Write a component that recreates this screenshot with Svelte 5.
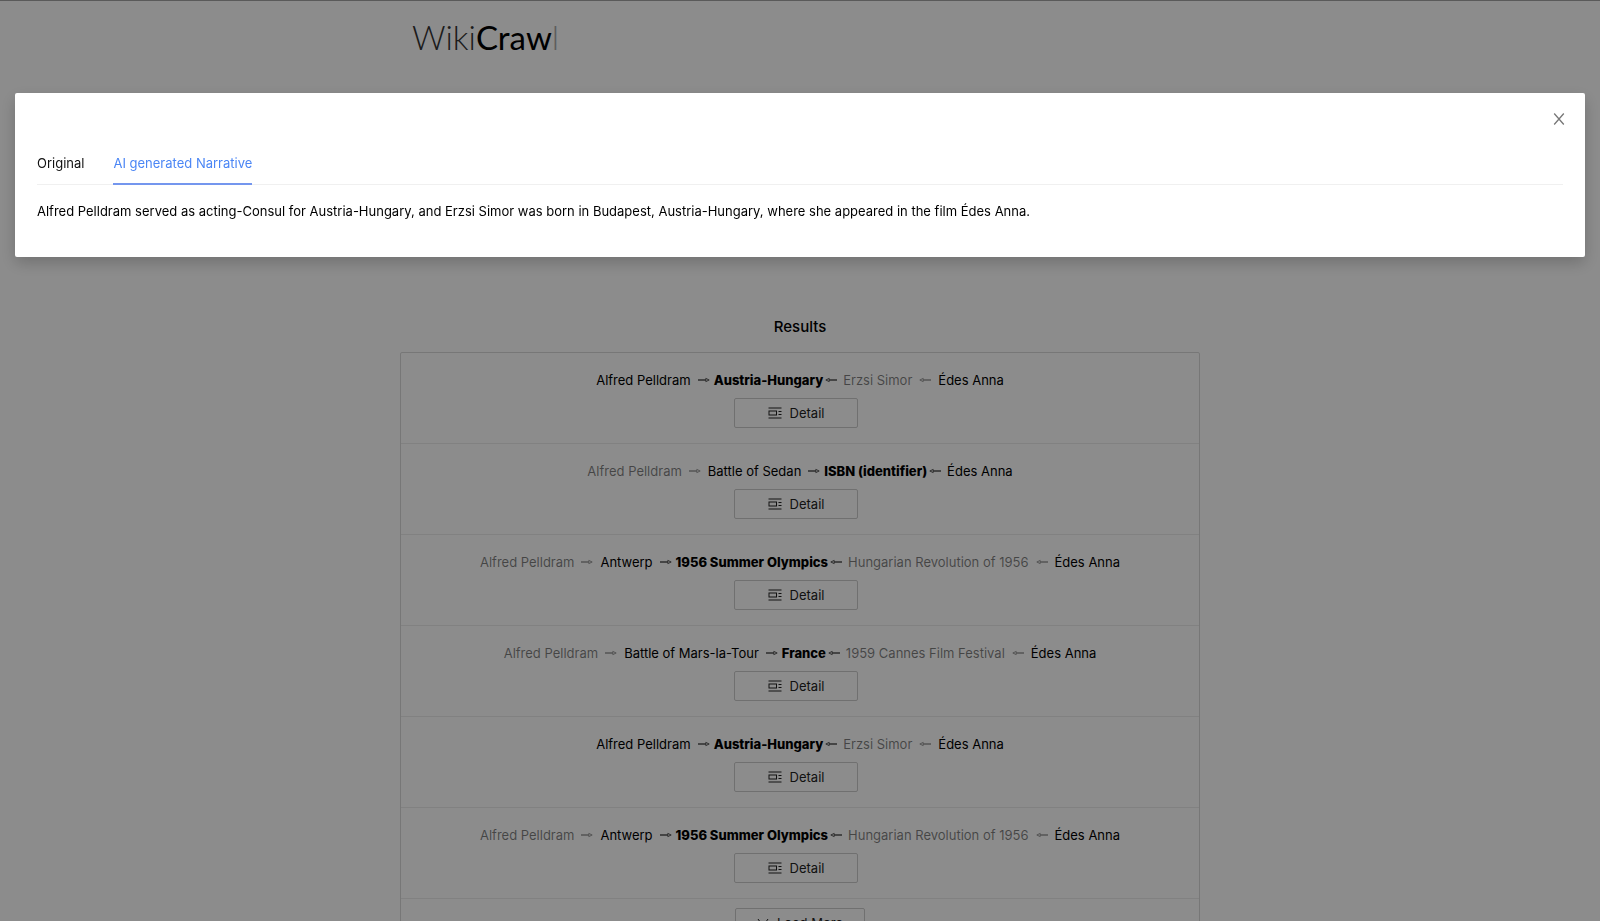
<script lang="ts">
  type Step = { title: string; visited?: boolean };

  const routes: { left: Step[]; meet: string; right: Step[] }[] = [
    {
      left: [{ title: "Alfred Pelldram" }],
      meet: "Austria-Hungary",
      right: [{ title: "Erzsi Simor", visited: true }, { title: "Édes Anna" }]
    },
    {
      left: [{ title: "Alfred Pelldram", visited: true }, { title: "Battle of Sedan" }],
      meet: "ISBN (identifier)",
      right: [{ title: "Édes Anna" }]
    },
    {
      left: [{ title: "Alfred Pelldram", visited: true }, { title: "Antwerp" }],
      meet: "1956 Summer Olympics",
      right: [{ title: "Hungarian Revolution of 1956", visited: true }, { title: "Édes Anna" }]
    },
    {
      left: [{ title: "Alfred Pelldram", visited: true }, { title: "Battle of Mars-la-Tour" }],
      meet: "France",
      right: [{ title: "1959 Cannes Film Festival", visited: true }, { title: "Édes Anna" }]
    },
    {
      left: [{ title: "Alfred Pelldram" }],
      meet: "Austria-Hungary",
      right: [{ title: "Erzsi Simor", visited: true }, { title: "Édes Anna" }]
    },
    {
      left: [{ title: "Alfred Pelldram", visited: true }, { title: "Antwerp" }],
      meet: "1956 Summer Olympics",
      right: [{ title: "Hungarian Revolution of 1956", visited: true }, { title: "Édes Anna" }]
    }
  ];

  const tabs = ["Original", "AI generated Narrative"];
  let activeTab = $state(1);
  let open = $state(true);
</script>

{#snippet arrow(back: boolean, faded: boolean)}
  <svg class="arrow" class:back class:faded width="12" height="8" viewBox="0 0 12 8" fill="none" stroke="currentColor" aria-hidden="true">
    <path d="M0 4H8" stroke-width="1.5" />
    <path d="M7.8 2.4L11.2 4L7.8 5.6Z" stroke-width="1" />
  </svg>
{/snippet}

<div class="page">
  <header class="header">
    <h1 class="logo"><span class="thin">Wiki</span><span class="thick">Craw</span><span class="last">l</span></h1>
  </header>

  <main class="results">
    <h2 class="results-title">Results</h2>
    <ul class="list">
      {#each routes as route}
        <li class="item">
          <div class="route">
            {#each route.left as step}
              <span class="step" class:visited={step.visited}>{step.title}</span>
              {@render arrow(false, !!step.visited)}
            {/each}
            <strong class="meet">{route.meet}</strong>
            {#each route.right as step, i}
              {@render arrow(true, i > 0)}
              <span class="step" class:visited={step.visited}>{step.title}</span>
            {/each}
          </div>
          <button class="btn" onclick={() => (open = true)}>
            <svg width="14" height="12" viewBox="0 0 14 12" fill="none" stroke="currentColor" aria-hidden="true">
              <path d="M0.5 1H13.5M0.5 11H13.5M10.5 4.5H13.5M10.5 7.5H13.5" />
              <rect x="1" y="4" width="7.5" height="4" />
            </svg>
            Detail
          </button>
        </li>
      {/each}
      <li class="more">
        <button class="btn wide">
          <svg width="12" height="12" viewBox="0 0 12 12" fill="none" stroke="currentColor" aria-hidden="true">
            <path d="M1 2L6 9L11 2" />
          </svg>
          Load More
        </button>
      </li>
    </ul>
  </main>
</div>

{#if open}
  <div class="mask"></div>
  <div class="modal" role="dialog" aria-modal="true">
    <button class="close" aria-label="Close" onclick={() => (open = false)}>
      <svg width="12" height="12" viewBox="0 0 12 12" fill="none" stroke="currentColor" stroke-width="1.3">
        <path d="M1.2 0.5L10.8 11.5M10.8 0.5L1.2 11.5" />
      </svg>
    </button>
    <div class="tabs" role="tablist">
      {#each tabs as tab, i}
        <button class="tab" class:active={activeTab === i} role="tab" aria-selected={activeTab === i} onclick={() => (activeTab = i)}>
          {tab}
        </button>
      {/each}
    </div>
    <p class="narrative">
      Alfred Pelldram served as acting-Consul for Austria-Hungary, and Erzsi Simor was born in Budapest, Austria-Hungary, where she appeared in the film Édes Anna.
    </p>
  </div>
{/if}

<style>
  :global(html),
  :global(body) {
    height: 100%;
  }

  :global(body) {
    overflow: hidden;
    background: #fff;
    font-family: Inter, "Liberation Sans", sans-serif;
    font-size: 13px;
    color: #000;
  }

  button {
    font: inherit;
    cursor: pointer;
  }

  .page {
    width: 50%;
    margin: 0 auto;
  }

  .header {
    padding: 15px 12px 0;
    height: 280px;
  }

  .logo {
    margin: 0;
    font-family: Lato, sans-serif;
    font-size: 33px;
    line-height: 44px;
    font-weight: 400;
  }

  .thin {
    font-weight: 300;
    color: #333;
  }

  .last {
    font-weight: 300;
    color: #aaa;
  }

  .results-title {
    margin: 0;
    padding: 20px 0 13px;
    font-size: 15px;
    line-height: 24px;
    font-weight: 500;
    text-align: center;
  }

  .list {
    margin: 0;
    padding: 0;
    list-style: none;
    border: 1px solid #d9d9d9;
    border-radius: 2px;
  }

  .item {
    display: flex;
    flex-direction: column;
    align-items: center;
    padding: 16px 0 15px;
    border-bottom: 1px solid #ececec;
  }

  .route {
    display: flex;
    align-items: center;
    line-height: 22px;
    margin-bottom: 7px;
  }

  .step {
    margin: 0 7px;
  }

  .step:first-child {
    margin-left: 0;
  }

  .step:last-child {
    margin-right: 0;
  }

  .visited {
    color: rgba(0, 0, 0, 0.5);
  }

  .meet {
    margin: 0 2px 0 4px;
    font-weight: 800;
  }

  .arrow {
    color: #555;
  }

  .arrow.back {
    transform: scaleX(-1);
  }

  .arrow.faded {
    color: #999;
  }

  .meet + .arrow + .step {
    margin-left: 6px;
  }

  .btn {
    display: flex;
    align-items: center;
    justify-content: center;
    gap: 8px;
    width: 124px;
    height: 30px;
    margin-right: 8px;
    padding: 0;
    background: #fff;
    border: 1px solid #ccc;
    border-radius: 2px;
    color: #222;
  }

  .more {
    display: flex;
    justify-content: center;
    padding: 9px 0;
  }

  .wide {
    width: 130px;
    margin-right: 0;
  }

  .mask {
    position: fixed;
    inset: 0;
    background: rgba(0, 0, 0, 0.45);
    border-top: 1px solid #5a5a5a;
  }

  .modal {
    position: fixed;
    top: 93px;
    left: 15px;
    right: 15px;
    box-sizing: border-box;
    padding: 48px 22px 34px;
    background: #fff;
    border-radius: 2px;
    box-shadow: 0 6px 16px rgba(0, 0, 0, 0.2);
  }

  .close {
    position: absolute;
    top: 16px;
    right: 16px;
    display: flex;
    padding: 4px;
    border: 0;
    background: none;
    color: #777;
  }

  .tabs {
    display: flex;
    gap: 29px;
    border-bottom: 1px solid #f0f0f0;
  }

  .tab {
    padding: 13px 0 11px;
    margin-bottom: -1px;
    border: 0;
    border-bottom: 2px solid transparent;
    background: none;
    line-height: 18px;
    color: #111;
  }

  .tab.active {
    color: #4b86f5;
    border-bottom-color: #7496ee;
  }

  .narrative {
    margin: 14px 0 0;
    line-height: 24px;
  }
</style>
